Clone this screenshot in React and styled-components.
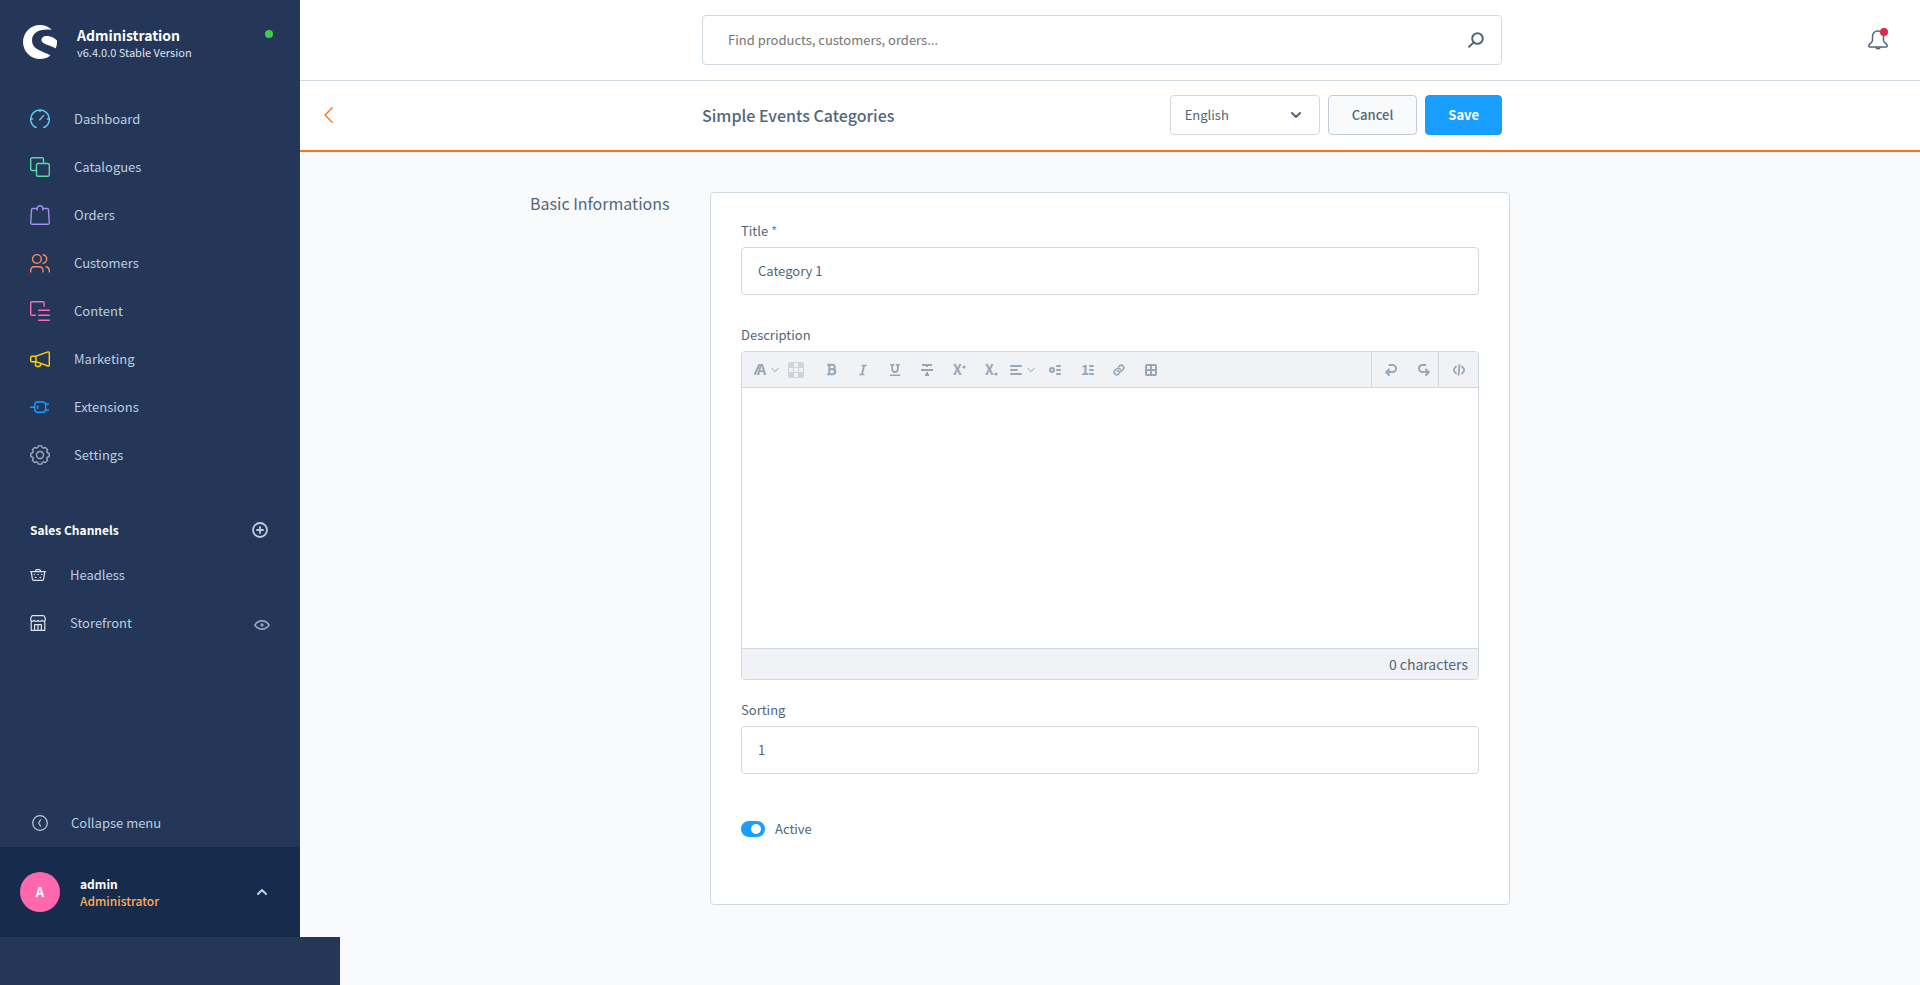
import React, { useState } from 'react';
import styled, { createGlobalStyle } from 'styled-components';
import { SiShopware } from 'react-icons/si';
import { FaBold, FaItalic, FaUnderline } from 'react-icons/fa';

const color = {
	sidebar: '#243758',
	sidebarDark: '#172b4d',
	sidebarText: '#bccde0',
	text: '#52667a',
	border: '#d1d9e0',
	page: '#f9fafc',
	toolbar: '#f0f2f5',
	toolbarIcon: '#98a7b5',
	primary: '#189eff',
	accent: '#ff7214',
};

const GlobalStyle = createGlobalStyle`
	*, *::before, *::after {
		box-sizing: border-box;
	}

	body {
		margin: 0;
		background: ${color.page};
	}

	body, button, input, select, textarea {
		font-family: 'Noto Sans CJK SC', 'Noto Sans', sans-serif;
		font-size: 13px;
		line-height: 20px;
		color: ${color.text};
	}

	svg {
		display: block;
		flex: none;
	}
`;

const Page = styled.div`
	display: flex;
	flex-direction: column;
	min-height: 100vh;
`;

const Shell = styled.div`
	display: flex;
	flex: 1;
`;

const BottomStrip = styled.div`
	width: 340px;
	height: 48px;
	background: ${color.sidebar};
`;

/* Sidebar */

const Sidebar = styled.aside`
	display: flex;
	flex-direction: column;
	flex: none;
	width: 300px;
	background: ${color.sidebar};
	color: ${color.sidebarText};
`;

const SidebarHeader = styled.header`
	display: flex;
	align-items: flex-start;
	height: 95px;
	padding: 25px 27px 0 23px;
	color: #fff;
`;

const Brand = styled.div`
	flex: 1;
	padding: 2px 0 0 20px;
`;

const BrandName = styled.div`
	font-size: 14px;
	line-height: 17px;
	font-weight: 700;
`;

const BrandVersion = styled.div`
	font-size: 11px;
	line-height: 17px;
	color: #dce4ee;
`;

const StatusDot = styled.span`
	width: 8px;
	height: 8px;
	margin-top: 5px;
	border-radius: 50%;
	background: #37d046;
`;

const NavLink = styled.a`
	display: flex;
	align-items: center;
	gap: 24px;
	height: 48px;
	padding: 0 30px;
	color: inherit;
	text-decoration: none;
`;

const NavIcon = styled.svg`
	width: 20px;
	height: 20px;
	fill: none;
	stroke: ${(props) => props.$color};
	stroke-width: 1.4;
	stroke-linecap: round;
	stroke-linejoin: round;
`;

const ChannelHeader = styled.div`
	display: flex;
	align-items: center;
	justify-content: space-between;
	height: 42px;
	margin-top: 30px;
	padding: 0 32px 0 30px;
`;

const ChannelTitle = styled.h2`
	margin: 0;
	font-size: 12px;
	font-weight: 700;
	color: #fff;
`;

const PlainButton = styled.button`
	display: flex;
	padding: 0;
	border: 0;
	background: none;
	color: inherit;
	cursor: pointer;
`;

const ChannelRow = styled.div`
	display: flex;
	align-items: center;
	height: 48px;
	padding: 0 30px;
`;

const ChannelLink = styled.a`
	display: flex;
	align-items: center;
	flex: 1;
	gap: 24px;
	color: inherit;
	text-decoration: none;
`;

const CollapseButton = styled(PlainButton)`
	align-items: center;
	gap: 23px;
	height: 48px;
	margin-top: auto;
	padding: 0 32px;
`;

const UserBar = styled.button`
	display: flex;
	align-items: center;
	height: 90px;
	padding: 0 33px 0 20px;
	border: 0;
	background: ${color.sidebarDark};
	color: ${color.sidebarText};
	text-align: left;
	cursor: pointer;
`;

const Avatar = styled.span`
	width: 40px;
	height: 40px;
	border-radius: 50%;
	background: #ff68ac;
	color: #fff;
	font-size: 13px;
	line-height: 40px;
	font-weight: 700;
	text-align: center;
`;

const UserText = styled.span`
	display: flex;
	flex-direction: column;
	flex: 1;
	padding-left: 20px;
	font-size: 12px;
	line-height: 17px;
`;

const UserName = styled.span`
	font-weight: 700;
	color: #fff;
`;

const UserRole = styled.span`
	font-weight: 500;
	color: #ffab57;
`;

/* Main area */

const Main = styled.main`
	flex: 1;
	min-width: 0;
`;

const TopBar = styled.header`
	display: grid;
	grid-template-columns: 1fr minmax(0, 800px) 1fr;
	align-items: center;
	height: 81px;
	padding-right: 16px;
	border-bottom: 1px solid ${color.border};
	background: #fff;
`;

const SearchBox = styled.div`
	display: flex;
	align-items: center;
	grid-column: 2;
	height: 50px;
	padding: 0 17px 0 25px;
	border: 1px solid ${color.border};
	border-radius: 4px;
`;

const SearchInput = styled.input`
	flex: 1;
	padding: 0;
	border: 0;
	outline: 0;
	background: none;
	font-size: 13px;

	&::placeholder {
		color: #757575;
	}
`;

const BellButton = styled(PlainButton)`
	position: relative;
	justify-self: end;
	margin-right: 16px;

	&::after {
		content: '';
		position: absolute;
		top: -2px;
		right: 0;
		width: 8px;
		height: 8px;
		border-radius: 50%;
		background: #de294c;
	}
`;

const PageBar = styled.div`
	display: grid;
	grid-template-columns: 1fr minmax(0, 800px) 1fr;
	align-items: center;
	height: 71px;
	padding: 0 16px 1px 0;
	border-bottom: 2px solid ${color.accent};
	background: #fff;
`;

const BackLink = styled.a`
	justify-self: start;
	margin-left: 24px;
	color: ${color.accent};
`;

const PageBarContent = styled.div`
	display: flex;
	align-items: center;
	gap: 8px;
`;

const PageTitle = styled.h1`
	flex: 1;
	margin: 0;
	font-size: 16px;
	line-height: 24px;
	font-weight: 500;
`;

const SelectWrap = styled.div`
	position: relative;
	width: 150px;

	svg {
		position: absolute;
		top: 16px;
		right: 19px;
		pointer-events: none;
	}
`;

const Select = styled.select`
	width: 100%;
	height: 40px;
	padding: 0 14px;
	border: 1px solid ${color.border};
	border-radius: 4px;
	background: #fff;
	appearance: none;
`;

const Button = styled.button`
	height: 40px;
	padding: 0 ${(props) => (props.$primary ? 22 : 23)}px;
	border: 1px solid ${(props) => (props.$primary ? color.primary : '#c2ccd6')};
	border-radius: 4px;
	background: ${(props) => (props.$primary ? color.primary : color.page)};
	color: ${(props) => (props.$primary ? '#fff' : color.text)};
	font-weight: ${(props) => (props.$primary ? 700 : 500)};
	cursor: pointer;
`;

/* Form */

const Section = styled.section`
	display: grid;
	grid-template-columns: 1fr minmax(0, 800px) 1fr;
	padding: 40px 0 30px;
`;

const SectionTitle = styled.h2`
	justify-self: end;
	width: 180px;
	margin: 0;
	font-size: 16px;
	line-height: 22px;
	font-weight: 400;
	white-space: nowrap;
`;

const Card = styled.form`
	padding: 28px 30px 65px;
	border: 1px solid ${color.border};
	border-radius: 4px;
	background: #fff;
`;

const Field = styled.div`
	margin-bottom: ${(props) => props.$gap}px;
`;

const Label = styled.label`
	display: block;
	margin-bottom: 6px;
`;

const Required = styled.span`
	color: ${color.primary};
`;

const TextInput = styled.input`
	width: 100%;
	height: 48px;
	padding: 0 16px 2px;
	border: 1px solid ${color.border};
	border-radius: 4px;
	background: #fff;
`;

const Editor = styled.div`
	overflow: hidden;
	border: 1px solid ${color.border};
	border-radius: 4px;
`;

const Toolbar = styled.div`
	display: flex;
	height: 36px;
	padding-left: 9px;
	border-bottom: 1px solid ${color.border};
	background: ${color.toolbar};
	color: ${color.toolbarIcon};
`;

const ToolButton = styled(PlainButton)`
	align-items: center;
	justify-content: center;
	width: 32px;
`;

const DropButton = styled(ToolButton)`
	justify-content: space-between;
	padding: 0 4px 0 3px;

	svg:last-child {
		opacity: 0.7;
	}
`;

const SwatchButton = styled(ToolButton)`
	justify-content: flex-start;
	padding-left: 5px;
`;

const ToolGroup = styled.div`
	display: flex;
	margin-left: ${(props) => (props.$push ? 'auto' : 0)};
	border-left: 1px solid ${color.border};
`;

const HistoryButton = styled(ToolButton)`
	justify-content: flex-end;
	width: 33px;
	padding-right: 8px;
`;

const CodeButton = styled(ToolButton)`
	width: 39px;
`;

const EditorArea = styled.textarea`
	display: block;
	width: 100%;
	height: 260px;
	padding: 16px;
	border: 0;
	outline: 0;
	resize: none;
`;

const EditorFooter = styled.div`
	height: 31px;
	padding: 0 10px;
	border-top: 1px solid ${color.border};
	background: ${color.toolbar};
	font-size: 14px;
	line-height: 30px;
	text-align: right;
`;

const SwitchLabel = styled.label`
	display: flex;
	align-items: center;
	gap: 10px;
`;

const Switch = styled.input`
	display: flex;
	align-items: center;
	justify-content: ${(props) => (props.checked ? 'flex-end' : 'flex-start')};
	width: 24px;
	height: 16px;
	margin: 0;
	padding: 0 4px;
	border-radius: 8px;
	background: ${(props) => (props.checked ? color.primary : color.border)};
	appearance: none;

	&::before {
		content: '';
		width: 10px;
		height: 10px;
		border-radius: 50%;
		background: #fff;
	}
`;

const gearPath = () => {
	const points = [];
	for (let i = 0; i < 8; i += 1) {
		[[-17, 7.7], [-10, 9.3], [10, 9.3], [17, 7.7]].forEach(([deg, r]) => {
			const a = ((i * 45 + deg) * Math.PI) / 180;
			points.push(`${(10 + r * Math.sin(a)).toFixed(2)} ${(10 - r * Math.cos(a)).toFixed(2)}`);
		});
	}
	return `M${points.join('L')}Z`;
};

const navItems = [
	{
		label: 'Dashboard',
		color: '#5fc8ee',
		d: 'M6.3 18.3H5.2A9.3 9.3 0 1 1 14.8 18.3H13.7M10 1V2.6M.8 10H2.6M19.2 10H17.4M9.8 10.7L13.6 6.6',
	},
	{
		label: 'Catalogues',
		color: '#57d9a3',
		d: 'M6 13.5H2.2A1.5 1.5 0 0 1 .7 12V2.2A1.5 1.5 0 0 1 2.2 .7H12A1.5 1.5 0 0 1 13.5 2.2V6M8 6.5H17.8A1.5 1.5 0 0 1 19.3 8V17.8A1.5 1.5 0 0 1 17.8 19.3H8A1.5 1.5 0 0 1 6.5 17.8V8A1.5 1.5 0 0 1 8 6.5Z',
	},
	{
		label: 'Orders',
		color: '#a092f0',
		d: 'M5 3.5H2.6A1 1 0 0 0 1.6 4.4L.7 17.8A1.4 1.4 0 0 0 2.1 19.3H17.9A1.4 1.4 0 0 0 19.3 17.8L18.4 4.4A1 1 0 0 0 17.4 3.5H15M7.2 5V3.5A2.8 2.8 0 0 1 12.8 3.5V5M5 3.5H7.2M12.8 3.5H15',
	},
	{
		label: 'Customers',
		color: '#f88962',
		d: 'M11.3 6A4.4 4.4 0 1 1 2.5 6A4.4 4.4 0 1 1 11.3 6M13.2 1.7A4.4 4.4 0 0 1 13.2 10.3M.7 19V17.3A3.6 3.6 0 0 1 4.3 13.7H9.4A3.6 3.6 0 0 1 13 17.3V19M16 13.8A4 4 0 0 1 19.3 17.6V19',
	},
	{
		label: 'Content',
		color: '#ff68b4',
		d: 'M5.3 14.3H2A1.3 1.3 0 0 1 .7 13V2A1.3 1.3 0 0 1 2 .7H12.8A1.3 1.3 0 0 1 14.1 2V5.3M8.7 9.3H19.3M8.7 14.3H19.3M8.7 19.3H19.3',
	},
	{
		label: 'Marketing',
		color: '#ffd700',
		d: 'M6 7.2L18 2.9A1 1 0 0 1 19.3 3.9V16A1 1 0 0 1 18 17L6 12.7ZM6 7.2H2A1.3 1.3 0 0 0 .7 8.5V11.4A1.3 1.3 0 0 0 2 12.7H6M5.5 12.7V15.5A2 2 0 0 0 7.5 17.5H8.5A2 2 0 0 0 10.5 15.5V14.4',
	},
	{
		label: 'Extensions',
		color: '#189eff',
		d: 'M6.4 5H13.9L15.6 6.4V13.6L13.9 15.3H6.4L4.8 13.6V6.6ZM.7 10.2H4.8M15.6 7.2H18.4M15.6 13H18.4M7.6 9V11.4',
	},
	{
		label: 'Settings',
		color: '#9eabba',
		d: `${gearPath()}M13.5 10A3.5 3.5 0 1 1 6.5 10A3.5 3.5 0 1 1 13.5 10`,
	},
];

const line = { fill: 'none', stroke: 'currentColor', strokeLinecap: 'round', strokeLinejoin: 'round' };

const Chevron = ({ up, width = 10, stroke = 2 }) => (
	<svg width={width} height="8" viewBox="0 0 10 8" {...line} strokeWidth={stroke}>
		<path d={up ? 'M1 6L5 2L9 6' : 'M1 2L5 6L9 2'} />
	</svg>
);

const PlusIcon = () => (
	<svg width="16" height="16" {...line} strokeWidth="1.8">
		<circle cx="8" cy="8" r="7" />
		<path d="M8 5V11M5 8H11" />
	</svg>
);

const BasketIcon = () => (
	<svg width="16" height="16" {...line} stroke="#dce4ee" strokeWidth="1.2">
		<path d="M.6 4.6H15.4M1.2 4.6L2.4 12.2A1.4 1.4 0 0 0 3.8 13.4H12.2A1.4 1.4 0 0 0 13.6 12.2L14.8 4.6M5.6 4.4V3.4A1 1 0 0 1 6.4 2.6H9.6A1 1 0 0 1 10.4 3.4V4.4" />
		<path d="M4 7.5H4.6M7.7 7.5H8.3M11.4 7.5H12M5.4 10.4H6M10 10.4H10.6" />
	</svg>
);

const StoreIcon = () => (
	<svg width="16" height="16" {...line} stroke="#dce4ee" strokeWidth="1.2">
		<path d="M1.2 6.3V15.4H14.8V6.3M.6 4.4L1.4 1.6A1.4 1.4 0 0 1 2.7 .6H13.3A1.4 1.4 0 0 1 14.6 1.6L15.4 4.4A2 2 0 0 1 11.7 5.2A2 2 0 0 1 8 5.2A2 2 0 0 1 4.3 5.2A2 2 0 0 1 .6 4.4" />
		<path d="M4.6 15.4V9.6H11.4V15.4M8 9.6V15.4" />
	</svg>
);

const EyeIcon = () => (
	<svg width="16" height="16" viewBox="0 -5 16 16" {...line} stroke="#93a5bb" strokeWidth="1.7">
		<path d="M.9 5C2.7 2.3 5 .9 8 .9S13.3 2.3 15.1 5C13.3 7.7 11 9.1 8 9.1S2.7 7.7 .9 5Z" />
		<circle cx="8" cy="5" r=".8" />
	</svg>
);

const CollapseIcon = () => (
	<svg width="16" height="16" {...line} strokeWidth="1.2">
		<circle cx="8" cy="8" r="7.3" />
		<path d="M8.6 4.8L6.6 8L8.6 11.2" />
	</svg>
);

const SearchIcon = () => (
	<svg width="16" height="16" {...line} strokeWidth="2">
		<circle cx="9.5" cy="6.5" r="5.3" />
		<path d="M5.4 10.6L1.2 14.8" />
	</svg>
);

const BellIcon = () => (
	<svg width="20" height="21" {...line} stroke={color.text} strokeWidth="1.5">
		<path d="M4.5 6.2A5.2 5.2 0 0 1 9.7 1H10.3A5.2 5.2 0 0 1 15.5 6.2V10.5C15.5 12.5 19.2 14 19.2 15.6V16A1 1 0 0 1 18.2 17H1.8A1 1 0 0 1 .8 16V15.6C.8 14 4.5 12.5 4.5 10.5Z" />
		<path d="M8 17.4A2.1 2.1 0 0 0 12 17.4" />
	</svg>
);

const BackIcon = () => (
	<svg width="9" height="16" {...line} strokeWidth="1.4">
		<path d="M8.2 .8L1 8L8.2 15.2" />
	</svg>
);

const SwatchIcon = () => (
	<svg width="16" height="16" fill={color.toolbar}>
		<rect width="16" height="16" rx="2" fill="#cdd5db" />
		<rect x="6" y="1" width="4" height="4" />
		<rect x="1" y="6" width="4" height="4" />
		<rect x="6" y="6" width="4" height="4" />
		<rect x="11" y="6" width="4" height="4" />
		<rect x="6" y="11" width="4" height="4" />
	</svg>
);

const LetterIcon = ({ letter, children, x = 0 }) => (
	<svg width="13" height="24" fill="currentColor">
		<text x={x} y="17" fontFamily="Noto Sans CJK SC, sans-serif" fontSize="14" fontWeight="700">
			{letter}
		</text>
		{children}
	</svg>
);

const StrikeIcon = () => (
	<svg width="12" height="12" fill="currentColor">
		<rect x="1" y="0" width="10" height="2" />
		<rect x="5" y="1" width="2" height="2" />
		<rect x="0" y="5" width="12" height="2" />
		<rect x="5" y="8" width="2" height="3" />
		<rect x="4" y="10" width="4" height="2" />
	</svg>
);

const AlignIcon = () => (
	<svg width="12" height="12" {...line} strokeWidth="2">
		<path d="M1 2H11M1 6H7M1 10H11" />
	</svg>
);

const BulletIcon = () => (
	<svg width="12" height="12" {...line} strokeWidth="2">
		<circle cx="3" cy="6" r="2" />
		<path d="M8 2H11M8 6H11M8 10H11" />
	</svg>
);

const NumberIcon = () => (
	<LetterIcon letter="1">
		<path d="M9 8H12M9 12H12M9 16H12" {...line} strokeWidth="2" />
	</LetterIcon>
);

const LinkIcon = () => (
	<svg width="12" height="12" viewBox="0 0 24 24" {...line} strokeWidth="3.4">
		<path d="M9.5 13.5A5 5 0 0 0 17 14L20.5 10.5A5 5 0 0 0 13.5 3.5L11.5 5.5" />
		<path d="M14.5 10.5A5 5 0 0 0 7 10L3.5 13.5A5 5 0 0 0 10.5 20.5L12.5 18.5" />
	</svg>
);

const TableIcon = () => (
	<svg width="12" height="12" {...line} strokeWidth="2">
		<rect x="1" y="1" width="10" height="10" rx="1" />
		<path d="M6 1V11M1 6H11" />
	</svg>
);

const UndoIcon = ({ flip }) => (
	<svg width="12" height="12" {...line} strokeWidth="2">
		<path
			d={
				flip
					? 'M7.5 1H4.5A3.5 3.5 0 0 0 4.5 8H10.5M8 5.5L10.8 8.2L8 11'
					: 'M4.5 1H7.5A3.5 3.5 0 0 1 7.5 8H1.5M4 5.5L1.2 8.2L4 11'
			}
		/>
	</svg>
);

const CodeIcon = () => (
	<svg width="12" height="12" {...line} strokeWidth="1.8">
		<path d="M3 2.5L1 5V7L3 9.5M9 2.5L11 5V7L9 9.5M6.4 1.2L5.6 10.8" />
	</svg>
);

const tools = [
	{ name: 'Bold', icon: <FaBold size={13} /> },
	{ name: 'Italic', icon: <FaItalic size={12} /> },
	{ name: 'Underline', icon: <FaUnderline size={12} /> },
	{ name: 'Strikethrough', icon: <StrikeIcon /> },
	{ name: 'Superscript', icon: <LetterIcon letter="X"><circle cx="11" cy="9" r="1.6" /></LetterIcon> },
	{ name: 'Subscript', icon: <LetterIcon letter="X"><circle cx="11" cy="16" r="1.6" /></LetterIcon> },
	{ name: 'Alignment', icon: <AlignIcon />, drop: true },
	{ name: 'Bullet list', icon: <BulletIcon /> },
	{ name: 'Numbered list', icon: <NumberIcon /> },
	{ name: 'Link', icon: <LinkIcon /> },
	{ name: 'Table', icon: <TableIcon /> },
];

const SideMenu = () => (
	<Sidebar>
		<SidebarHeader>
			<SiShopware size={34} />
			<Brand>
				<BrandName>Administration</BrandName>
				<BrandVersion>v6.4.0.0 Stable Version</BrandVersion>
			</Brand>
			<StatusDot />
		</SidebarHeader>
		<nav>
			{navItems.map((item) => (
				<NavLink href="#" key={item.label}>
					<NavIcon viewBox="0 0 20 20" $color={item.color}>
						<path d={item.d} />
					</NavIcon>
					{item.label}
				</NavLink>
			))}
		</nav>
		<ChannelHeader>
			<ChannelTitle>Sales Channels</ChannelTitle>
			<PlainButton aria-label="Add sales channel">
				<PlusIcon />
			</PlainButton>
		</ChannelHeader>
		<ChannelRow>
			<ChannelLink href="#">
				<BasketIcon />
				Headless
			</ChannelLink>
		</ChannelRow>
		<ChannelRow>
			<ChannelLink href="#">
				<StoreIcon />
				Storefront
			</ChannelLink>
			<PlainButton aria-label="Open storefront">
				<EyeIcon />
			</PlainButton>
		</ChannelRow>
		<CollapseButton>
			<CollapseIcon />
			Collapse menu
		</CollapseButton>
		<UserBar>
			<Avatar>A</Avatar>
			<UserText>
				<UserName>admin</UserName>
				<UserRole>Administrator</UserRole>
			</UserText>
			<Chevron up />
		</UserBar>
	</Sidebar>
);

const DescriptionEditor = () => {
	const [value, setValue] = useState('');

	return (
		<Editor>
			<Toolbar>
				<DropButton type="button" aria-label="Format">
					<LetterIcon letter="A" x={3}>
						<path d="M1 16L5 7" {...line} strokeWidth="2" />
					</LetterIcon>
					<Chevron width={8} stroke={1.3} />
				</DropButton>
				<SwatchButton type="button" aria-label="Text color">
					<SwatchIcon />
				</SwatchButton>
				{tools.map(({ name, icon, drop }) =>
					drop ? (
						<DropButton type="button" aria-label={name} key={name}>
							{icon}
							<Chevron width={8} stroke={1.3} />
						</DropButton>
					) : (
						<ToolButton type="button" aria-label={name} key={name}>
							{icon}
						</ToolButton>
					)
				)}
				<ToolGroup $push>
					<HistoryButton type="button" aria-label="Undo">
						<UndoIcon />
					</HistoryButton>
					<HistoryButton type="button" aria-label="Redo">
						<UndoIcon flip />
					</HistoryButton>
				</ToolGroup>
				<ToolGroup>
					<CodeButton type="button" aria-label="Code">
						<CodeIcon />
					</CodeButton>
				</ToolGroup>
			</Toolbar>
			<EditorArea id="description" value={value} onChange={(e) => setValue(e.target.value)} />
			<EditorFooter>{value.length} characters</EditorFooter>
		</Editor>
	);
};

const CategoryForm = () => {
	const [active, setActive] = useState(true);

	return (
		<Card>
			<Field $gap={30}>
				<Label htmlFor="title">
					Title <Required>*</Required>
				</Label>
				<TextInput id="title" defaultValue="Category 1" />
			</Field>
			<Field $gap={20}>
				<Label htmlFor="description">Description</Label>
				<DescriptionEditor />
			</Field>
			<Field $gap={45}>
				<Label htmlFor="sorting">Sorting</Label>
				<TextInput id="sorting" type="number" defaultValue="1" />
			</Field>
			<SwitchLabel>
				<Switch type="checkbox" checked={active} onChange={(e) => setActive(e.target.checked)} />
				Active
			</SwitchLabel>
		</Card>
	);
};

export default () => (
	<Page>
		<GlobalStyle />
		<Shell>
			<SideMenu />
			<Main>
				<TopBar>
					<SearchBox>
						<SearchInput aria-label="Search" placeholder="Find products, customers, orders..." />
						<PlainButton aria-label="Start search">
							<SearchIcon />
						</PlainButton>
					</SearchBox>
					<BellButton aria-label="Notifications">
						<BellIcon />
					</BellButton>
				</TopBar>
				<PageBar>
					<BackLink href="#" aria-label="Back">
						<BackIcon />
					</BackLink>
					<PageBarContent>
						<PageTitle>Simple Events Categories</PageTitle>
						<SelectWrap>
							<Select aria-label="Language" defaultValue="English">
								<option>English</option>
							</Select>
							<Chevron />
						</SelectWrap>
						<Button>Cancel</Button>
						<Button $primary>Save</Button>
					</PageBarContent>
				</PageBar>
				<Section>
					<SectionTitle>Basic Informations</SectionTitle>
					<CategoryForm />
				</Section>
			</Main>
		</Shell>
		<BottomStrip />
	</Page>
);
